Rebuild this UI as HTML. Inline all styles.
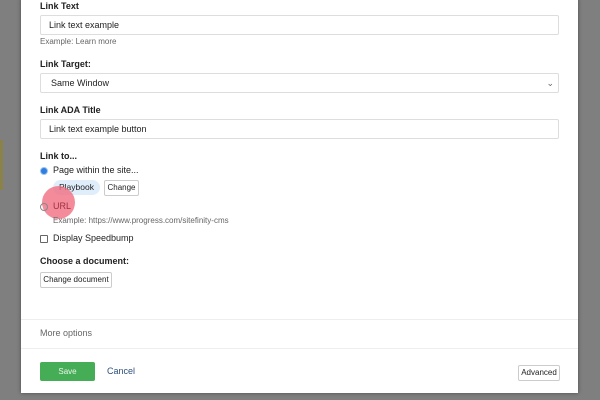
<!DOCTYPE html><html><head><style>
body{margin:0;width:600px;height:400px;background:#7f7f7f;font-family:"Liberation Sans",sans-serif;position:relative;overflow:hidden;color:#222}
.m{position:absolute;left:21px;top:-2px;width:557px;height:395px;background:#fff;box-shadow:0 0 4px rgba(0,0,0,.4)}
.a{position:absolute;font-size:9px;white-space:nowrap}
.b{font-weight:bold;font-size:9px}
.in{position:absolute;left:19px;width:517px;height:18px;border:1px solid #ddd;border-radius:2px;font-size:9px;line-height:18px;padding-left:8px;box-sizing:content-box}
.s{color:#666;font-size:8px}
.btn{position:absolute;border:1px solid #ccc;border-radius:2px;font-size:8px;background:#fff;text-align:center;line-height:14px}
.hr{position:absolute;left:0;width:557px;height:1px;background:#eee}
</style></head><body>
<div style="position:absolute;left:0;top:140px;width:3px;height:50px;background:#8a8248"></div>
<div class="m">
<div class="a b" style="left:19px;top:3px">Link Text</div>
<div class="in" style="top:17px;width:509px">Link text example</div>
<div class="a s" style="left:19px;top:39px">Example: Learn more</div>
<div class="a b" style="left:19px;top:61px">Link Target:</div>
<div class="in" style="top:75px;width:509px;padding-left:10px;width:507px">Same Window<span style="position:absolute;right:4px;top:0;color:#666">&#8964;</span></div>
<div class="a b" style="left:19px;top:107px">Link ADA Title</div>
<div class="in" style="top:121px;width:509px">Link text example button</div>
<div class="a b" style="left:19px;top:153px">Link to...</div>
<div style="position:absolute;left:19px;top:169px;width:6px;height:6px;border-radius:50%;background:#2f7de1;border:1px solid #9bc2f0"></div>
<div class="a" style="left:32px;top:167px">Page within the site...</div>
<div style="position:absolute;left:32px;top:182px;width:47px;height:15px;border-radius:8px;background:#dfeefa"></div>
<div class="a" style="left:38px;top:184px;font-size:8.5px">Playbook</div>
<div class="btn" style="left:83px;top:182px;width:33px">Change</div>
<div style="position:absolute;left:21px;top:188px;width:33px;height:33px;border-radius:50%;background:rgba(240,110,130,.8)"></div>
<div style="position:absolute;left:19px;top:205px;width:6px;height:6px;border-radius:50%;border:1px solid #888"></div>
<div class="a" style="left:32px;top:203px;color:#a03040">URL</div>
<div class="a s" style="left:32px;top:218px">Example: https://www.progress.com/sitefinity-cms</div>
<div style="position:absolute;left:19px;top:237px;width:6px;height:6px;border:1px solid #666;border-radius:1px"></div>
<div class="a" style="left:32px;top:235px">Display Speedbump</div>
<div class="a b" style="left:19px;top:258px">Choose a document:</div>
<div class="btn" style="left:19px;top:274px;width:70px">Change document</div>
<div class="hr" style="top:321px"></div>
<div class="a" style="left:19px;top:330px;color:#666">More options</div>
<div class="hr" style="top:350px"></div>
<div style="position:absolute;left:19px;top:364px;width:55px;height:19px;background:#46ad57;border-radius:2px;color:#eaf6ec;font-size:8px;line-height:19px;text-align:center">Save</div>
<div class="a" style="left:86px;top:368px;color:#2d4f7a">Cancel</div>
<div class="btn" style="left:497px;top:367px;width:40px">Advanced</div>
</div>
</body></html>
